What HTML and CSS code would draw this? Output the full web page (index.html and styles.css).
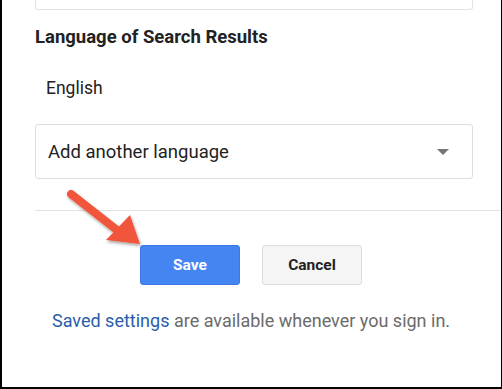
FILE: index.html
```html
<!DOCTYPE html>
<html lang="en">
<head>
    <meta charset="UTF-8">
    <meta name="viewport" content="width=device-width, initial-scale=1.0">
    <title>Search Settings</title>
    <link rel="stylesheet" href="styles.css">
</head>
<body>
    <div class="frame">
        <div class="top-box"></div>
        <h2 class="section-title">Language of Search Results</h2>
        <div class="current-lang">English</div>
        <div class="select-box">
            <span>Add another language</span>
            <span class="caret"></span>
        </div>
        <div class="divider"></div>
        <div class="button-row">
            <button class="btn btn-save">Save</button>
            <button class="btn btn-cancel">Cancel</button>
        </div>
        <p class="note"><a href="#">Saved settings</a> are available whenever you sign in.</p>

        <!-- callout arrow pointing at Save -->
        <svg class="callout" width="90" height="70" viewBox="0 0 90 70">
            <defs>
                <filter id="shadow" x="-20%" y="-20%" width="150%" height="150%">
                    <feDropShadow dx="1" dy="2" stdDeviation="1.5" flood-color="#000" flood-opacity="0.35"/>
                </filter>
            </defs>
            <g filter="url(#shadow)">
                <line x1="9" y1="12" x2="60" y2="52" stroke="#f1563c" stroke-width="8" stroke-linecap="round"/>
                <polygon points="68,33 78,62 44,58" fill="#f1563c"/>
            </g>
        </svg>
    </div>
</body>
</html>
```

FILE: styles.css
```css
body {
    margin: 0;
    background-color: #fff;
    font-family: Roboto, "Liberation Sans", Arial, sans-serif;
    color: #222;
}
.frame {
    position: relative;
    width: 502px;
    height: 389px;
    box-sizing: border-box;
    border: 2px solid #000;
    border-top: none;
    border-right-width: 1px;
    padding-left: 33px;
    overflow: hidden;
}
.top-box {
    width: 438px;
    height: 10px;
    box-sizing: border-box;
    border: 1px solid #e2e2e2;
    border-top: none;
    border-radius: 0 0 3px 3px;
}
.section-title {
    margin: 16px 0 0;
    font-size: 18.5px;
    line-height: 22px;
    font-weight: bold;
    color: #222;
}
.current-lang {
    margin-top: 29px;
    padding-left: 11px;
    font-size: 17.5px;
    line-height: 22px;
    color: #222;
}
.select-box {
    display: flex;
    align-items: center;
    justify-content: space-between;
    margin-top: 25px;
    width: 438px;
    height: 55px;
    box-sizing: border-box;
    border: 1px solid #dedede;
    border-radius: 3px;
    padding: 0 23px 0 12px;
    font-size: 18.5px;
    color: #222;
}
.caret {
    width: 0;
    height: 0;
    border-left: 6px solid transparent;
    border-right: 6px solid transparent;
    border-top: 6px solid #757575;
}
.divider {
    margin-top: 31px;
    margin-right: -2px;
    height: 1px;
    background-color: #e2e2e2;
}
.button-row {
    display: flex;
    gap: 22px;
    margin-top: 34px;
    padding-left: 105px;
}
.btn {
    width: 100px;
    height: 40px;
    border-radius: 3px;
    font-family: Roboto, "Liberation Sans", Arial, sans-serif;
    font-size: 15.5px;
    font-weight: bold;
    cursor: pointer;
}
.btn-save {
    background-color: #4485f2;
    border: 1px solid #3b78e7;
    color: #fff;
}
.btn-cancel {
    background-color: #f5f5f5;
    border: 1px solid #dcdcdc;
    color: #222;
}
.note {
    margin: 25px 0 0;
    padding-left: 17px;
    font-size: 18px;
    line-height: 22px;
    color: #6b6b6b;
}
.note a {
    color: #2a5ea8;
    text-decoration: none;
}
.callout {
    position: absolute;
    left: 60px;
    top: 182px;
}
```
